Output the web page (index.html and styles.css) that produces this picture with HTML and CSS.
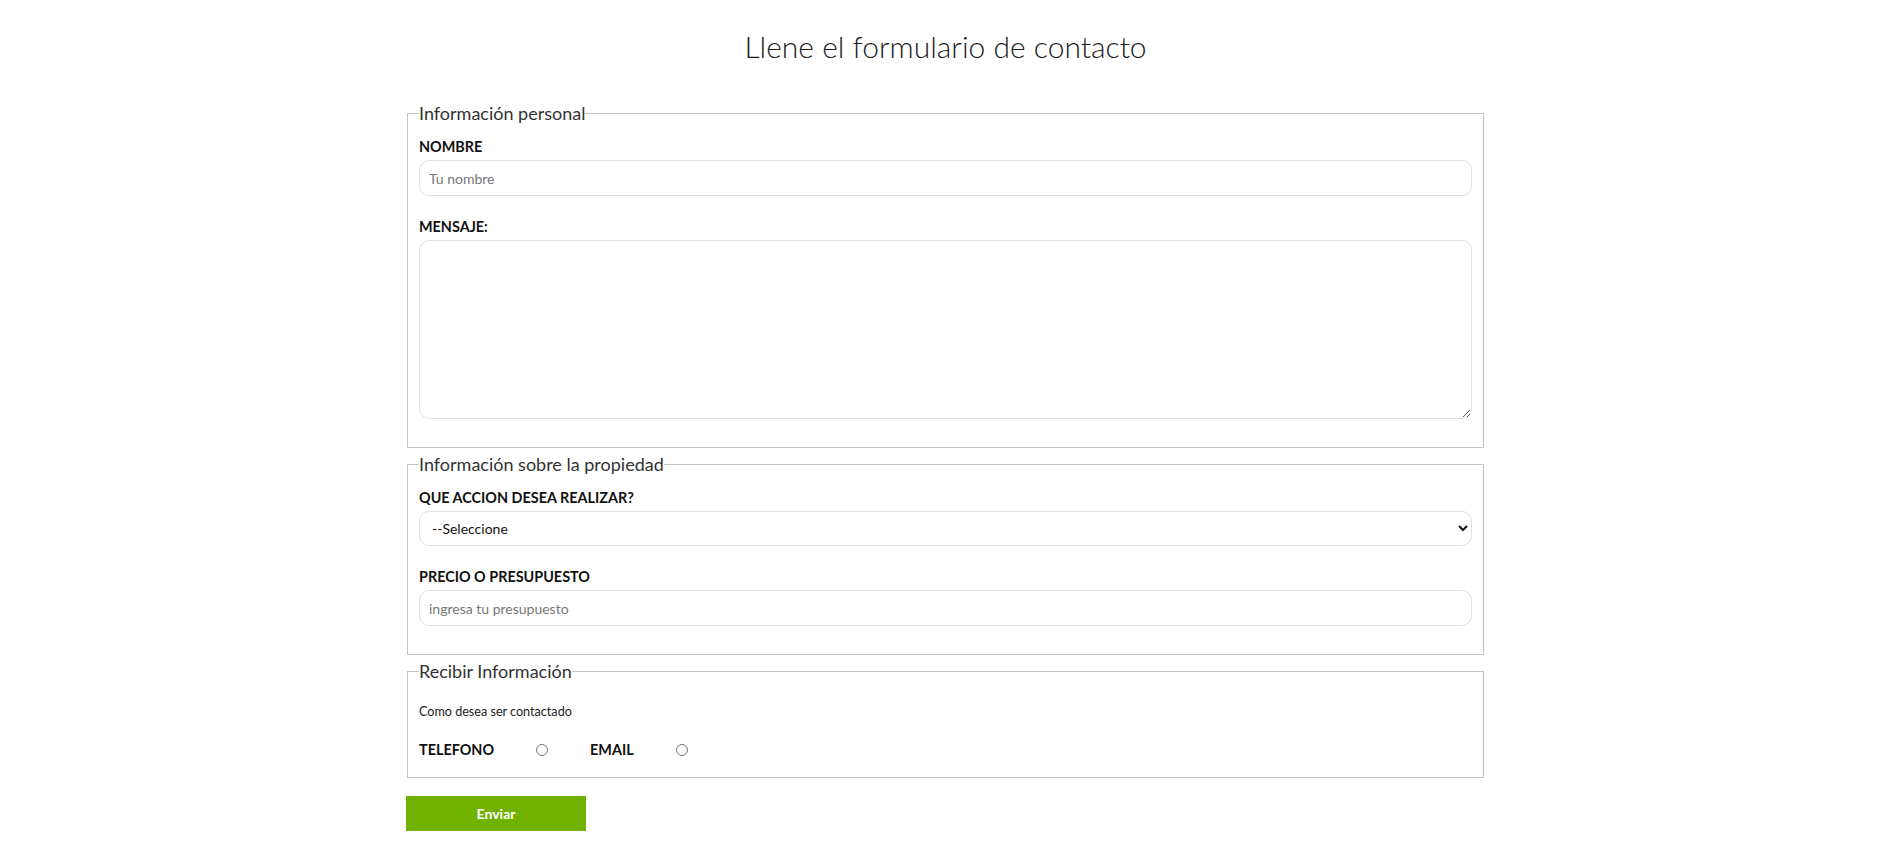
FILE: index.html
```html
<!DOCTYPE html>
<html lang="es">
<head>
<meta charset="UTF-8">
<title>Contacto</title>
<link rel="stylesheet" href="styles.css">
</head>
<body>
<main class="contenedor">
  <h1 class="titulo">Llene el formulario de contacto</h1>
  <form class="formulario">
    <fieldset class="grupo">
      <legend class="grupo__titulo">Información personal</legend>
      <label class="campo__label" for="nombre">Nombre</label>
      <input class="campo" type="text" id="nombre" placeholder="Tu nombre">
      <label class="campo__label" for="mensaje">Mensaje:</label>
      <textarea class="campo campo--area" id="mensaje"></textarea>
    </fieldset>

    <fieldset class="grupo">
      <legend class="grupo__titulo">Información sobre la propiedad</legend>
      <label class="campo__label" for="opciones">Que accion desea realizar?</label>
      <select class="campo campo--select" id="opciones">
        <option value="" disabled selected>--Seleccione</option>
        <option value="compra">Compra</option>
        <option value="vende">Vende</option>
      </select>
      <label class="campo__label" for="presupuesto">Precio o presupuesto</label>
      <input class="campo" type="number" id="presupuesto" placeholder="ingresa tu presupuesto">
    </fieldset>

    <fieldset class="grupo grupo--contacto">
      <legend class="grupo__titulo">Recibir Información</legend>
      <p class="grupo__texto">Como desea ser contactado</p>
      <div class="opciones">
        <label class="campo__label campo__label--inline" for="telefono">Telefono</label>
        <input class="radio" type="radio" name="contacto" id="telefono" value="telefono">
        <label class="campo__label campo__label--inline" for="email">Email</label>
        <input class="radio" type="radio" name="contacto" id="email" value="email">
      </div>
    </fieldset>

    <input class="boton" type="submit" value="Enviar">
  </form>
</main>
</body>
</html>
```

FILE: styles.css
```css
* {
  box-sizing: border-box;
}

html {
  font-size: 16px;
}

body {
  margin: 0;
  font-family: Lato, "Open Sans", "Liberation Sans", sans-serif;
  color: #333333;
  background: #ffffff;
}

.contenedor {
  width: 1079px;
  margin: 0 auto;
  padding-bottom: 20px;
}

.titulo {
  margin: 26px 0 36px;
  font-size: 30px;
  line-height: 40px;
  font-weight: 300;
  text-align: center;
  color: #1b1b1b;
}

.formulario {
  display: flex;
  flex-direction: column;
  align-items: flex-start;
}

.grupo {
  align-self: stretch;
  margin: 0 1px 5px;
  padding: 14px 11px 28px;
  border: 1px solid #c3c3c3;
  display: flex;
  flex-direction: column;
}

.grupo__titulo {
  padding: 0;
  font-size: 18px;
  line-height: 22px;
  font-weight: 400;
  color: #333333;
}

.campo__label {
  display: block;
  font-size: 14.4px;
  line-height: 17px;
  font-weight: 700;
  text-transform: uppercase;
  color: #111111;
  margin-bottom: 5px;
}

.campo {
  width: 100%;
  height: 36px;
  margin: 0 0 22px;
  padding: 0 9px;
  border: 1px solid #e1e1e1;
  border-radius: 10px;
  background: #ffffff;
  font-family: Lato, "Open Sans", "Liberation Sans", sans-serif;
  font-size: 14px;
  color: #111111;
}

.campo::placeholder {
  color: #777777;
}

.campo:last-child {
  margin-bottom: 0;
}

.campo--area {
  height: 179px;
  padding: 9px;
  resize: vertical;
}

.campo--select {
  height: 35px;
  padding: 0 8px;
}

.grupo__texto {
  margin: 8px 0 21px;
  font-size: 12.6px;
  line-height: 16px;
  font-weight: 400;
  color: #222222;
}

.grupo--contacto {
  padding-bottom: 19px;
}

.opciones {
  display: flex;
  align-items: center;
  gap: 42px;
}

.campo__label--inline {
  margin: 0;
}

.radio {
  margin: 0;
  width: 12px;
  height: 12px;
}

.boton {
  margin-top: 13px;
  width: 180px;
  height: 35px;
  border: none;
  background: #71b100;
  color: #ffffff;
  font-family: Lato, "Open Sans", "Liberation Sans", sans-serif;
  font-size: 14px;
  font-weight: 700;
  cursor: pointer;
}
```
